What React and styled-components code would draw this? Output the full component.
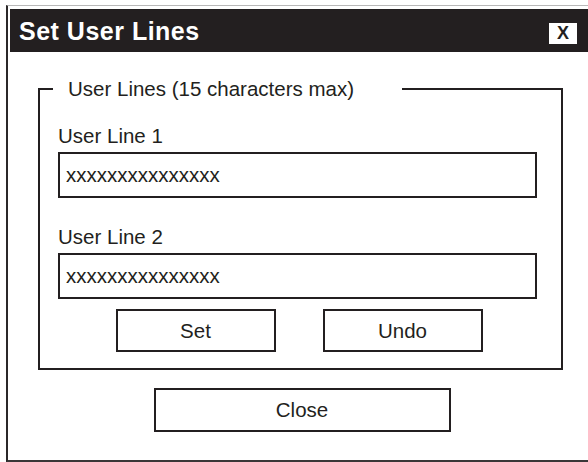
import React from 'react'
import styled, { createGlobalStyle } from 'styled-components'

const GlobalStyle = createGlobalStyle`
  html, body {
    margin: 0;
    background: #ffffff;
    overflow: hidden;
  }
  body {
    font-family: "Liberation Sans", Arial, sans-serif;
    color: #231f20;
  }
`

const Window = styled.div`
  box-sizing: border-box;
  margin: 5px 0 0 6px;
  width: 586px;
  height: 457px;
  border-left: 2px solid #2b2829;
  border-top: 1px solid #b8b8b8;
  border-bottom: 2px solid #3a3738;
  padding: 3px 0 0 2px;
  display: flex;
  flex-direction: column;
`

const TitleBar = styled.div`
  height: 43px;
  background: #231f20;
  color: #ffffff;
  display: flex;
  align-items: center;
  justify-content: space-between;
  padding-left: 9px;
  box-sizing: border-box;
`

const Title = styled.h1`
  margin: 2px 0 0 0;
  font-size: 25px;
  font-weight: bold;
  letter-spacing: 0.5px;
  line-height: 29px;
`

const CloseBox = styled.button`
  width: 28px;
  height: 21px;
  margin: 6px 15px 0 0;
  padding: 0;
  border: none;
  background: #ffffff;
  color: #231f20;
  font-family: inherit;
  font-size: 18px;
  font-weight: bold;
  line-height: 21px;
`

const Body = styled.div`
  display: flex;
  flex-direction: column;
  padding-left: 28px;
`

const Group = styled.fieldset`
  box-sizing: border-box;
  width: 525px;
  margin: 25px 0 0 0;
  padding: 0;
  border: 2px solid #231f20;
`

const Legend = styled.legend`
  margin-left: 13px;
  padding: 0 48px 0 15px;
  font-size: 20.5px;
  line-height: 23px;
`

const Stack = styled.div`
  display: flex;
  flex-direction: column;
  padding: 24px 24px 16px 18px;
`

const Label = styled.label`
  font-size: 20.5px;
  line-height: 23px;
  margin-bottom: 5px;
`

const Field = styled.input`
  box-sizing: border-box;
  width: 479px;
  height: 46px;
  margin: 0 0 ${p => (p.$last ? '10px' : '27px')} 0;
  padding: 0 0 0 6px;
  border: 2px solid #231f20;
  border-radius: 0;
  font-family: inherit;
  font-size: 20.5px;
  color: #231f20;
  background: #ffffff;
  outline: none;
`

const ButtonRow = styled.div`
  display: flex;
  justify-content: center;
  gap: 47px;
  padding-left: 3px;
`

const Button = styled.button`
  box-sizing: border-box;
  width: ${p => p.$width || 160}px;
  height: ${p => p.$height || 43}px;
  padding: 0;
  border: 2px solid #231f20;
  border-radius: 0;
  background: #ffffff;
  color: #231f20;
  font-family: inherit;
  font-size: 20.5px;
`

const Footer = styled.div`
  display: flex;
  justify-content: center;
  padding: 18px 0 0 2px;
  width: 582px;
  box-sizing: border-box;
  margin-left: -28px;
`

export default function App() {
  return (
    <>
      <GlobalStyle />
      <Window>
        <TitleBar>
          <Title>Set User Lines</Title>
          <CloseBox>X</CloseBox>
        </TitleBar>
        <Body>
          <Group>
            <Legend>User Lines (15 characters max)</Legend>
            <Stack>
              <Label>User Line 1</Label>
              <Field defaultValue="xxxxxxxxxxxxxxx" />
              <Label>User Line 2</Label>
              <Field $last defaultValue="xxxxxxxxxxxxxxx" />
              <ButtonRow>
                <Button>Set</Button>
                <Button>Undo</Button>
              </ButtonRow>
            </Stack>
          </Group>
          <Footer>
            <Button $width={297} $height={44}>Close</Button>
          </Footer>
        </Body>
      </Window>
    </>
  )
}
